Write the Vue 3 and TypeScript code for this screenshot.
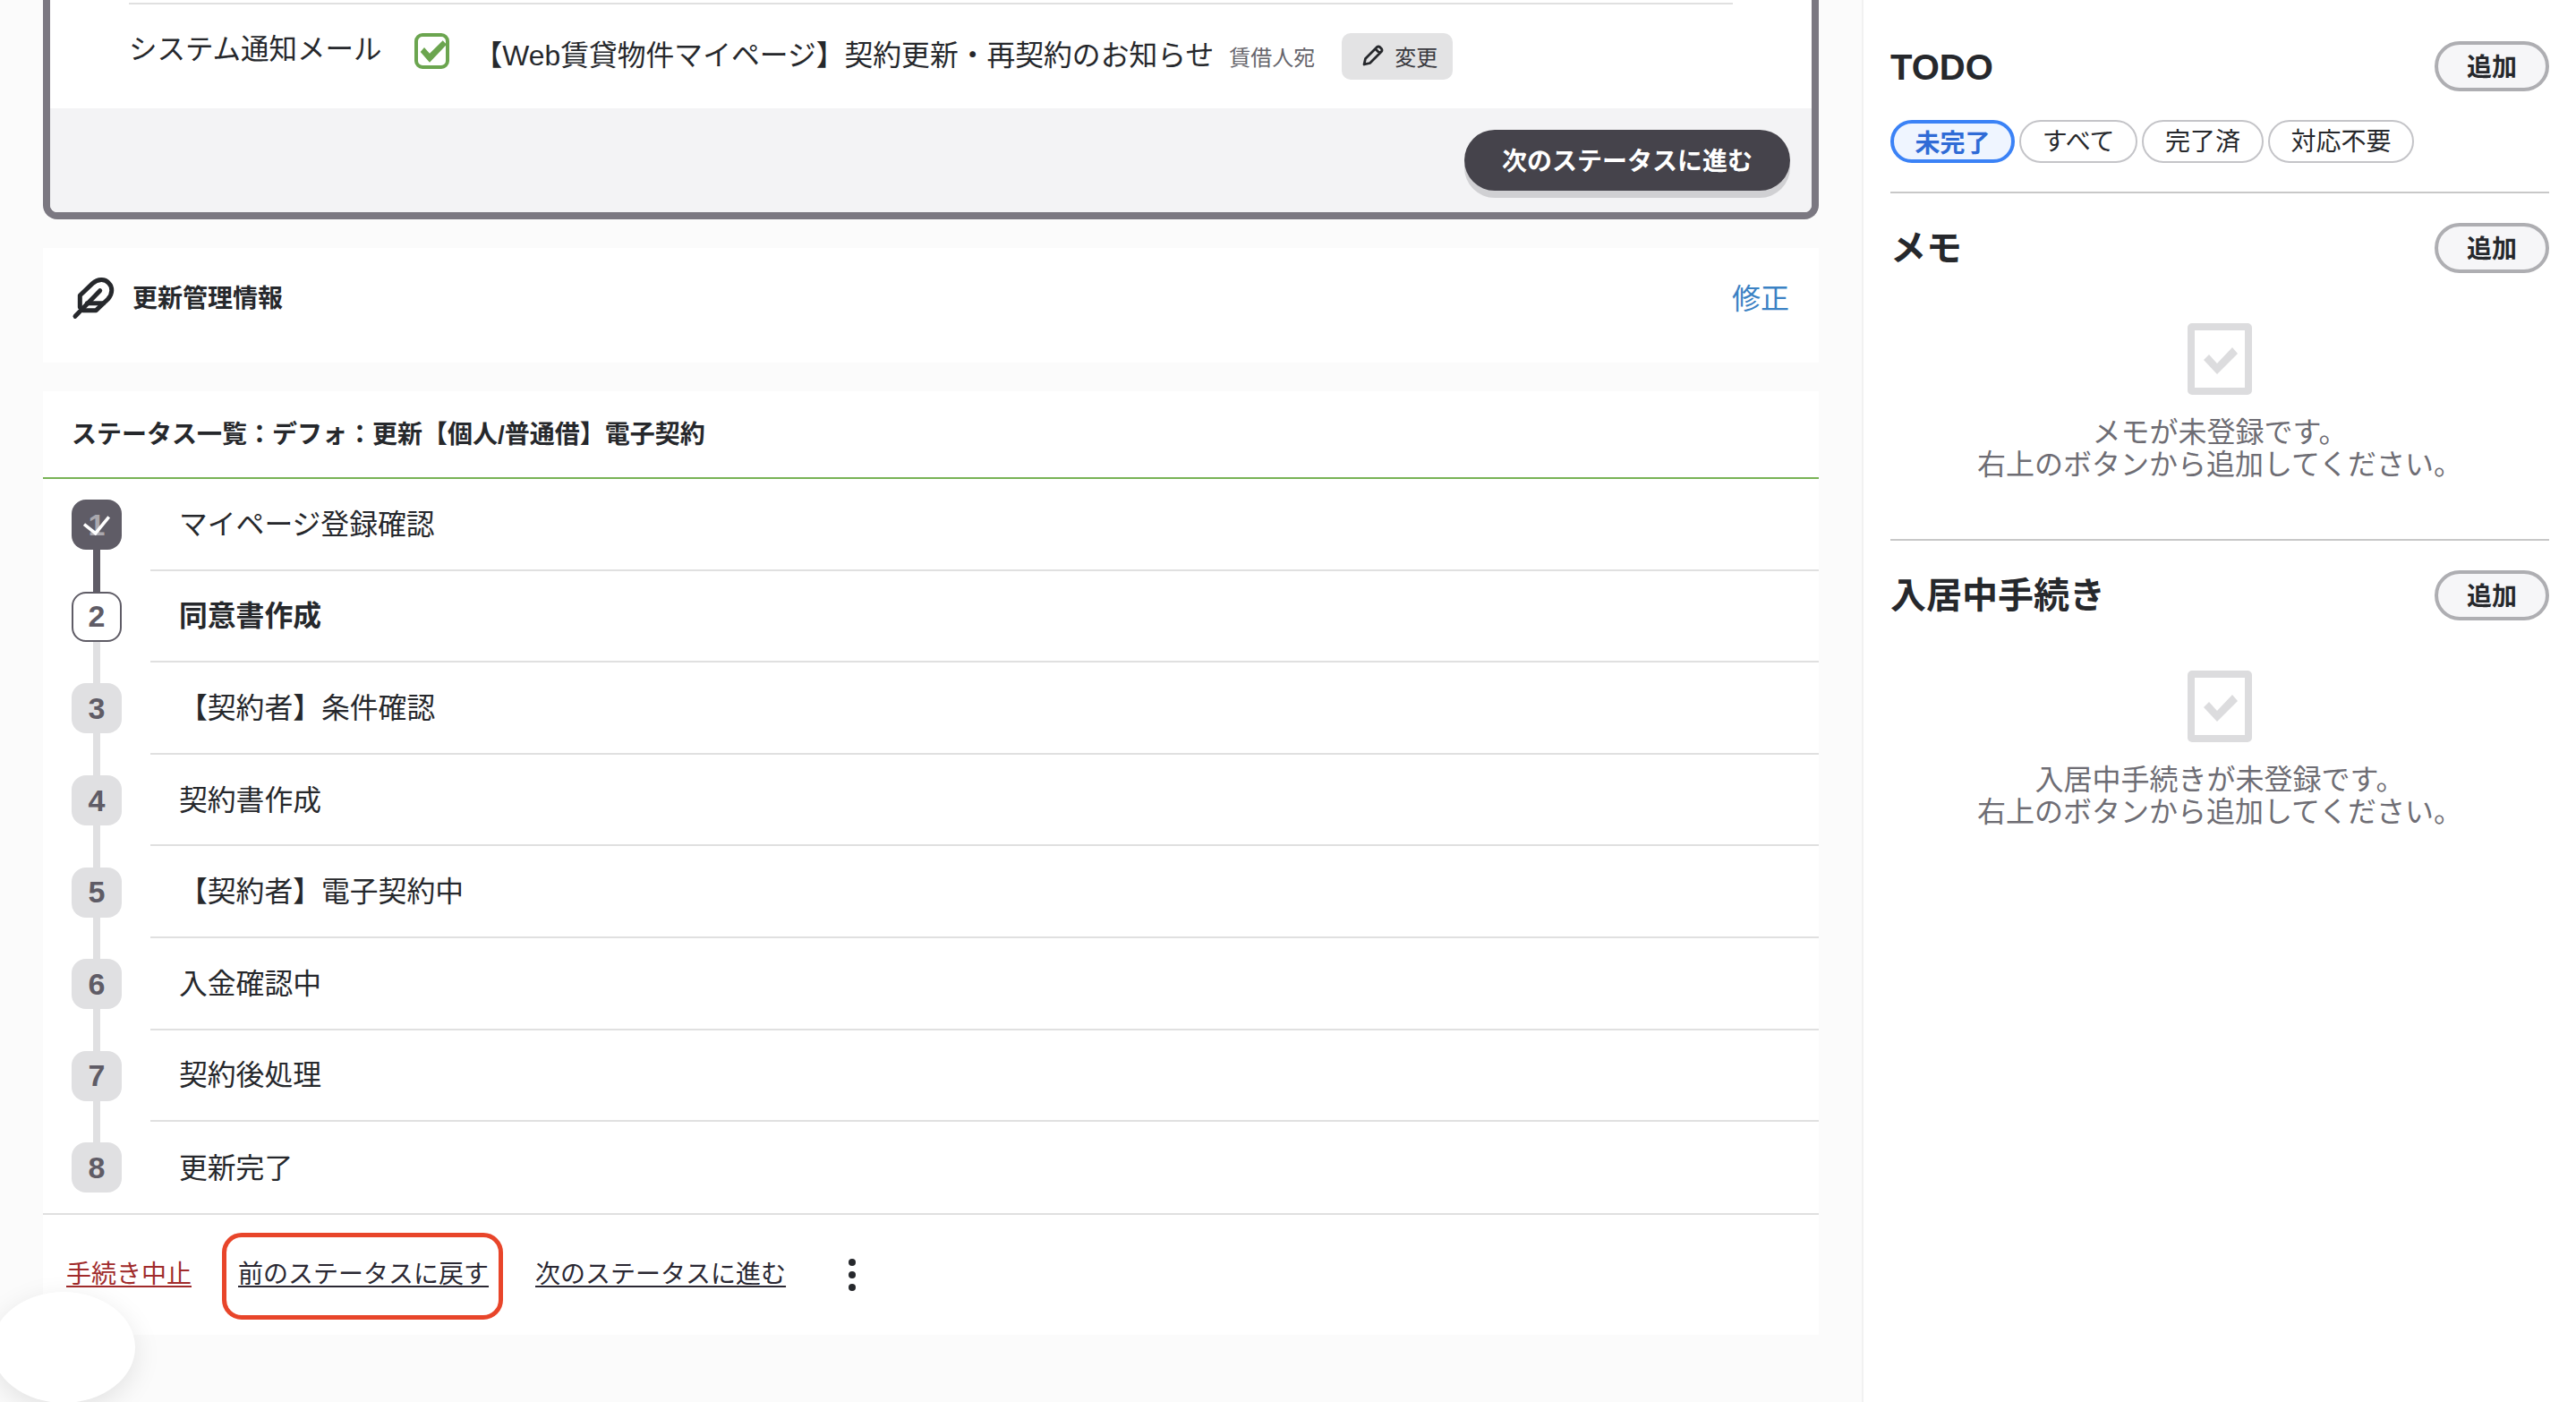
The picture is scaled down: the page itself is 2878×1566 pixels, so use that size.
<script setup lang="ts">
type StepState = 'done' | 'current' | 'todo'

interface Step {
  no: number
  label: string
  state: StepState
}

const steps: Step[] = [
  { no: 1, label: 'マイページ登録確認', state: 'done' },
  { no: 2, label: '同意書作成', state: 'current' },
  { no: 3, label: '【契約者】条件確認', state: 'todo' },
  { no: 4, label: '契約書作成', state: 'todo' },
  { no: 5, label: '【契約者】電子契約中', state: 'todo' },
  { no: 6, label: '入金確認中', state: 'todo' },
  { no: 7, label: '契約後処理', state: 'todo' },
  { no: 8, label: '更新完了', state: 'todo' },
]

const tabs = ['未完了', 'すべて', '完了済', '対応不要']

const emptySections = [
  { title: 'メモ', message: 'メモが未登録です。' },
  { title: '入居中手続き', message: '入居中手続きが未登録です。' },
]
</script>

<template>
  <div class="page">
    <main class="main">
      <section class="current-card">
        <div class="mail-row">
          <span class="mail-label">システム通知メール</span>
          <svg class="mail-check" viewBox="0 0 39 40" aria-hidden="true">
            <rect x="2" y="2" width="35" height="36" rx="7" fill="none" stroke="#6ba54f" stroke-width="4" />
            <path d="M6.7 21 11 16l6 6.7L31.7 8.3l4.3 4.4-19 20z" fill="#6ba54f" />
          </svg>
          <span class="mail-title">【Web賃貸物件マイページ】契約更新・再契約のお知らせ</span>
          <span class="mail-to">賃借人宛</span>
          <button class="change-button" type="button">
            <svg class="pencil" viewBox="0 0 24 24" aria-hidden="true">
              <path d="M2 22l1.5-6.5 13-13q1.5-1 3 0l2 2q1 1.5 0 3l-13 13zM14.5 4.5l5 5" />
            </svg>
            変更
          </button>
        </div>
        <div class="current-footer">
          <button class="next-button" type="button">次のステータスに進む</button>
        </div>
      </section>

      <section class="manage-card">
        <svg class="feather" viewBox="0 0 210 210" aria-hidden="true">
          <path d="M42 166 125 80" />
          <path d="M58 135V96l42-40c18-16 42-16 54-2 14 14 14 36-2 54l-40 38H68" />
          <path d="M82 122h54" />
        </svg>
        <h2 class="manage-title">更新管理情報</h2>
        <a class="manage-edit">修正</a>
      </section>

      <section class="status-card">
        <h2 class="status-title">ステータス一覧：デフォ：更新【個人/普通借】電子契約</h2>
        <ol class="steps">
          <li v-for="step in steps" :key="step.no" class="step" :class="`step--${step.state}`">
            <div class="step-mark">
              <span class="badge">
                {{ step.no }}
                <svg v-if="step.state === 'done'" class="badge-check" viewBox="0 0 56 56" aria-hidden="true">
                  <path d="M14 27.7l12.7 10 15-18.4" />
                </svg>
              </span>
            </div>
            <div class="step-label">{{ step.label }}</div>
          </li>
        </ol>
        <div class="actions">
          <a class="action action--stop">手続き中止</a>
          <a class="action action--marked">前のステータスに戻す</a>
          <a class="action">次のステータスに進む</a>
          <svg class="more" viewBox="0 0 8 36" aria-hidden="true">
            <circle cx="4" cy="4" r="4" />
            <circle cx="4" cy="18" r="4" />
            <circle cx="4" cy="32" r="4" />
          </svg>
        </div>
      </section>

      <div class="blob" />
    </main>

    <aside class="side">
      <section class="todo">
        <header class="side-head">
          <h2>TODO</h2>
          <button class="add-button" type="button">追加</button>
        </header>
        <div class="tabs">
          <button
            v-for="(tab, index) in tabs"
            :key="tab"
            class="tab"
            :class="{ 'tab--active': index === 0 }"
            type="button"
          >
            {{ tab }}
          </button>
        </div>
      </section>

      <section v-for="item in emptySections" :key="item.title" class="side-section">
        <header class="side-head">
          <h2>{{ item.title }}</h2>
          <button class="add-button" type="button">追加</button>
        </header>
        <div class="empty">
          <svg class="empty-icon" viewBox="0 0 72 80" aria-hidden="true">
            <rect x="4" y="4" width="64" height="72" rx="1" fill="none" stroke="#dcdcde" stroke-width="8" />
            <path d="M18 41l6-6 9 10 17-18 6 7-23 23z" fill="#dcdcde" />
          </svg>
          <p>{{ item.message }}<br>右上のボタンから追加してください。</p>
        </div>
      </section>
    </aside>
  </div>
</template>

<style>
html,
body {
  margin: 0;
  background: #fff;
}
</style>

<style scoped>
.page {
  display: flex;
  width: 2878px;
  height: 1566px;
  overflow: hidden;
  color: #26282c;
  font-family: "Liberation Sans", "Noto Sans CJK JP", sans-serif;
}

h2,
p,
ol {
  margin: 0;
  padding: 0;
}

button {
  font-family: inherit;
  cursor: pointer;
}

.main {
  position: relative;
  box-sizing: border-box;
  flex: none;
  width: 2080px;
  padding: 0 48px;
  background: #fbfbfb;
}

.current-card {
  border: 8px solid #7b7881;
  border-top: 0;
  border-radius: 0 0 16px 16px;
  background: #fff;
  overflow: hidden;
}

.mail-row {
  display: flex;
  align-items: flex-start;
  box-sizing: border-box;
  height: 121px;
  margin-left: 88px;
  margin-right: 88px;
  margin-top: 3px;
  padding-top: 32px;
  border-top: 2px solid #e0e0e0;
  font-size: 31.5px;
}

.mail-label {
  flex: none;
  line-height: 36px;
}

.mail-check {
  flex: none;
  width: 39px;
  height: 40px;
  margin-left: 36px;
}

.mail-title {
  flex: none;
  margin-left: 28px;
  font-size: 31.8px;
  line-height: 50px;
}

.mail-to {
  flex: none;
  margin-left: 17px;
  color: #66656c;
  font-size: 24px;
  line-height: 56px;
}

.change-button {
  display: flex;
  flex: none;
  align-items: center;
  gap: 12px;
  width: 124px;
  height: 52px;
  margin-left: 30px;
  padding: 0 0 2px 23px;
  border: 0;
  border-radius: 10px;
  background: #e3e3e4;
  color: #3a3a40;
  font-size: 24px;
}

.pencil {
  width: 24px;
  height: 24px;
  fill: none;
  stroke: #26282c;
  stroke-width: 2.8;
  stroke-linejoin: round;
}

.current-footer {
  display: flex;
  justify-content: flex-end;
  box-sizing: border-box;
  height: 116px;
  margin-top: -3px;
  padding: 24px 24px 0 0;
  background: #f3f3f5;
}

.next-button {
  width: 364px;
  height: 68px;
  padding: 0 0 3px;
  border: 0;
  border-radius: 34px;
  background: #45434b;
  box-shadow: 0 8px 0 #d0d0d3;
  color: #fff;
  font-size: 28px;
  font-weight: 700;
}

.manage-card {
  display: flex;
  align-items: center;
  box-sizing: border-box;
  height: 128px;
  margin-top: 32px;
  padding: 0 33px 20px 22px;
  background: #fff;
}

.feather {
  flex: none;
  width: 70px;
  height: 70px;
  margin-top: 4px;
  fill: none;
  stroke: #26282c;
  stroke-width: 15;
  stroke-linecap: round;
  stroke-linejoin: round;
}

.manage-title {
  margin-left: 8px;
  font-size: 28px;
  font-weight: 700;
}

.manage-edit {
  margin-left: auto;
  color: #3b82c4;
  font-size: 32px;
}

.status-card {
  margin-top: 32px;
  background: #fff;
}

.status-title {
  box-sizing: border-box;
  height: 98px;
  padding: 29px 0 0 32px;
  border-bottom: 2px solid #78b356;
  font-size: 28px;
  font-weight: 700;
  line-height: 40px;
}

.steps {
  list-style: none;
}

.step {
  display: flex;
  height: 102.6px;
}

.step-mark {
  position: relative;
  display: flex;
  flex: none;
  align-items: center;
  width: 120px;
  padding-left: 32px;
  box-sizing: border-box;
}

.step-mark::after {
  content: "";
  position: absolute;
  top: 79px;
  left: 56px;
  width: 8px;
  height: 48px;
  background: #e0e0e2;
}

.step--done .step-mark::after {
  background: #5f5c66;
}

.step:last-child .step-mark::after {
  display: none;
}

.badge {
  position: relative;
  z-index: 1;
  display: flex;
  align-items: center;
  justify-content: center;
  box-sizing: border-box;
  width: 56px;
  height: 56px;
  border-radius: 16px;
  background: #e0e0e2;
  color: #5f5c66;
  font-size: 34px;
  font-weight: 700;
}

.step--done .badge {
  background: #5f5c66;
  color: #aaa8ae;
}

.step--current .badge {
  border: 2px solid #5f5c66;
  background: #fff;
}

.badge-check {
  position: absolute;
  inset: 0;
  fill: none;
  stroke: #fff;
  stroke-width: 3.5;
}

.step-label {
  display: flex;
  flex: 1;
  align-items: center;
  padding: 0 0 5px 32px;
  border-bottom: 2px solid #e0e0e0;
  font-size: 31.8px;
}

.step--current .step-label {
  font-weight: 700;
}

.step:last-child .step-label {
  border-bottom: 0;
}

.actions {
  display: flex;
  align-items: flex-start;
  box-sizing: border-box;
  height: 136px;
  margin-top: -1px;
  padding: 47px 0 0 26px;
  border-top: 2px solid #e0e0e0;
}

.action {
  position: relative;
  flex: none;
  margin-right: 52px;
  color: #2a2833;
  font-size: 28px;
  line-height: 40px;
  text-decoration: underline;
  text-decoration-thickness: 2px;
  text-underline-offset: 3px;
}

.action--stop {
  color: #a02b2b;
}

.action--marked::after {
  content: "";
  position: absolute;
  top: -27px;
  right: -16px;
  bottom: -30px;
  left: -18px;
  border: 5px solid #e8452a;
  border-radius: 22px;
}

.more {
  flex: none;
  width: 8px;
  height: 36px;
  margin: 2px 0 0 18px;
  fill: #26282c;
}

.blob {
  position: absolute;
  top: 1443px;
  left: -9px;
  width: 160px;
  height: 124px;
  border-radius: 50%;
  background: #fff;
  box-shadow: 0 8px 30px rgba(0, 0, 0, 0.1);
}

.side {
  box-sizing: border-box;
  flex: 1;
  padding: 0 30px;
  border-left: 2px solid #f1f1f1;
  background: #fff;
}

.todo {
  box-sizing: border-box;
  height: 216px;
  padding-top: 46px;
  border-bottom: 2px solid #c8c8c8;
}

.side-head {
  display: flex;
  align-items: center;
  justify-content: space-between;
  height: 56px;
}

.side-head h2 {
  font-size: 40px;
  font-weight: 700;
  line-height: 56px;
}

.todo .side-head h2 {
  padding-top: 1px;
}

.side-section .side-head h2 {
  padding-bottom: 1px;
}

.add-button {
  box-sizing: border-box;
  width: 128px;
  height: 56px;
  padding: 0 0 2px;
  border: 4px solid #aeaeb2;
  border-radius: 28px;
  background: #f6f6f8;
  color: #26282c;
  font-size: 28px;
  font-weight: 700;
}

.tabs {
  display: flex;
  gap: 5px;
  margin-top: 32px;
}

.tab {
  box-sizing: border-box;
  height: 48px;
  padding: 0 23.7px 4px;
  border: 2px solid #c4c4c8;
  border-radius: 24px;
  background: #fff;
  color: #26282c;
  font-size: 28px;
}

.tab--active {
  padding: 0 23.5px 4px;
  border: 4px solid #3b82f6;
  background: #eff5ff;
  color: #2f6bd6;
  font-weight: 700;
}

.side-section {
  box-sizing: border-box;
  height: 388px;
  padding-top: 33px;
  border-bottom: 2px solid #c8c8c8;
}

.side-section:last-child {
  border-bottom: 0;
}

.empty {
  display: flex;
  flex-direction: column;
  align-items: center;
  margin-top: 56px;
  color: #6e6d74;
  font-size: 32px;
  line-height: 36px;
  text-align: center;
}

.empty-icon {
  width: 72px;
  height: 80px;
  margin-bottom: 24px;
}
</style>
